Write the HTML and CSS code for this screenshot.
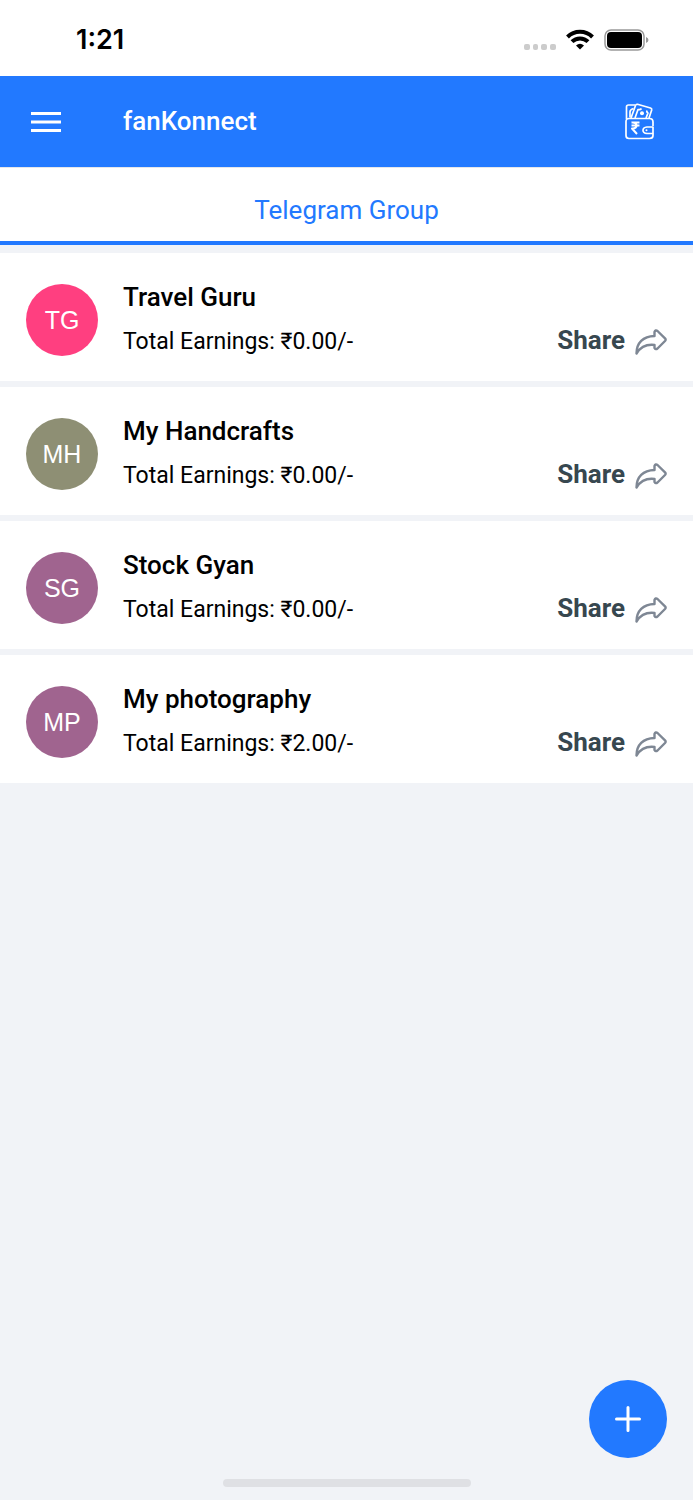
FILE: index.html
```html
<!DOCTYPE html>
<html lang="en">
<head>
  <meta charset="UTF-8">
  <title>fanKonnect</title>
  <meta name="viewport" content="width=device-width, initial-scale=1.0">
  <link rel="stylesheet" href="styles.css">
</head>
<body>

  <!-- icon used in every row -->
  <svg class="sprite" aria-hidden="true">
    <symbol id="share-icon" viewBox="0 0 32 28">
      <path d="M19.500 8V4Q20.500 1.500 22.500 3L30 10.300Q31.200 11.700 30 13L22.500 20.500Q20.500 22 19.500 20V17C11 16 5.500 19 1.500 25.500C1.500 15 8 8.300 19.500 8Z"/>
    </symbol>
  </svg>

  <div class="status-bar">
    <span class="time">1:21</span>
    <div class="status-icons">
      <svg class="signal" viewBox="0 0 32 6">
        <rect x="0" y="0" width="6" height="6" rx="2"/>
        <rect x="9" y="0" width="5" height="6" rx="2"/>
        <rect x="17" y="0" width="6" height="6" rx="2"/>
        <rect x="26" y="0" width="6" height="6" rx="2"/>
      </svg>
      <svg class="wifi" viewBox="0 0 28 21">
        <path d="M1.500 8A17.500 17.500 0 0 1 26.500 8M6 12.700A11.300 11.300 0 0 1 22 12.700"/>
        <path class="wifi-dot" d="M14 20.500L10 16.500Q14 13 18 16.500Z"/>
      </svg>
      <svg class="battery" viewBox="0 0 45 22">
        <rect class="battery-case" x="1" y="1" width="39" height="20" rx="6"/>
        <rect x="3" y="3" width="35" height="16" rx="4"/>
        <path class="battery-tip" d="M42 8Q44.500 9 44.500 11Q44.500 13 42 14Z"/>
      </svg>
    </div>
  </div>

  <header class="app-bar">
    <button class="icon-btn" type="button" aria-label="Menu">
      <svg class="menu-icon" viewBox="0 0 30 20">
        <path d="M0 1.500H30M0 10H30M0 18.500H30"/>
      </svg>
    </button>
    <h1 class="app-title">fanKonnect</h1>
    <button class="icon-btn" type="button" aria-label="Wallet">
      <svg class="wallet-icon" viewBox="0 0 30 37">
        <path d="M1.500 16V4Q1.500 2 3.500 2H10M5 14.500V9Q5 6.500 8.500 5.500"/>
        <path d="M6 15L10.500 2.500Q11 1 12.500 1.300L25.500 5Q27 5.500 26.700 7L24 15"/>
        <path d="M10 15L13 6.500Q15.500 7 16.500 5.500M22 7.500Q21.500 9.500 23 10L21 15"/>
        <circle class="wallet-fill" cx="17" cy="10.200" r="2"/>
        <path d="M28 23V19Q28 15.500 24.500 15.500H4Q1 15.500 1 18.500V32.500Q1 35.500 4 35.500H24.500Q28 35.500 28 32.500V30.500"/>
        <path d="M28 24H22Q18 24.500 18 27.200Q18 30 22 30.500H28Z"/>
        <circle class="wallet-fill" cx="21.500" cy="27.200" r="1"/>
        <path class="rupee" d="M6.500 19.500H14.500M6.500 22.500H14.500M6.500 19.500C13 18.500 13.500 26 7 25.500L12 31"/>
      </svg>
    </button>
  </header>

  <nav class="tabs">
    <a class="tab" href="#groups" aria-current="page">Telegram Group</a>
  </nav>

  <main class="groups" id="groups">
    <article class="group">
      <div class="avatar pink">TG</div>
      <div class="group-info">
        <h2 class="group-name">Travel Guru</h2>
        <p class="earnings">Total Earnings: ₹0.00/-</p>
      </div>
      <button class="share-btn" type="button">Share <svg class="share-icon"><use href="#share-icon"/></svg></button>
    </article>
    <article class="group">
      <div class="avatar olive">MH</div>
      <div class="group-info">
        <h2 class="group-name">My Handcrafts</h2>
        <p class="earnings">Total Earnings: ₹0.00/-</p>
      </div>
      <button class="share-btn" type="button">Share <svg class="share-icon"><use href="#share-icon"/></svg></button>
    </article>
    <article class="group">
      <div class="avatar plum">SG</div>
      <div class="group-info">
        <h2 class="group-name">Stock Gyan</h2>
        <p class="earnings">Total Earnings: ₹0.00/-</p>
      </div>
      <button class="share-btn" type="button">Share <svg class="share-icon"><use href="#share-icon"/></svg></button>
    </article>
    <article class="group">
      <div class="avatar plum">MP</div>
      <div class="group-info">
        <h2 class="group-name">My photography</h2>
        <p class="earnings">Total Earnings: ₹2.00/-</p>
      </div>
      <button class="share-btn" type="button">Share <svg class="share-icon"><use href="#share-icon"/></svg></button>
    </article>
  </main>

  <button class="add-btn" type="button" aria-label="Add group">
    <svg class="add-icon" viewBox="0 0 26 26">
      <path d="M13 1.500V24.500M1.500 13H24.500"/>
    </svg>
  </button>

  <div class="home-indicator"></div>

</body>
</html>
```
FILE: styles.css
```css
* {
  box-sizing: border-box;
}
body {
  margin: 0;
  min-height: 100vh;
  display: flex;
  flex-direction: column;
  background: #f1f3f7;
  color: #000;
  font-family: Roboto, "Noto Sans", sans-serif;
}
h1, h2, p {
  margin: 0;
}
button {
  padding: 0;
  border: none;
  background: none;
  font-family: inherit;
  cursor: pointer;
}
svg {
  display: block;
  flex: none;
}
.sprite {
  position: absolute;
  width: 0;
  height: 0;
}

/* status bar */
.status-bar {
  display: flex;
  justify-content: space-between;
  align-items: center;
  height: 76px;
  padding: 3px 44px 0 76px;
  background: #fff;
}
.time {
  font-family: Inter, sans-serif;
  font-size: 27px;
  font-weight: 600;
  line-height: 32px;
}
.status-icons {
  display: flex;
  align-items: center;
  gap: 10px;
  height: 26px;
}
.signal {
  width: 32px;
  height: 6px;
  margin-top: 14px;
  fill: #ccc;
}
.wifi {
  width: 28px;
  height: 21px;
  fill: none;
  stroke: #000;
  stroke-width: 4;
}
.wifi-dot {
  fill: #000;
  stroke: none;
}
.battery {
  width: 45px;
  height: 22px;
}
.battery-case {
  fill: none;
  stroke: #999;
  stroke-width: 1.5;
}
.battery-tip {
  fill: #999;
}

/* app bar */
.app-bar {
  display: flex;
  align-items: center;
  height: 91px;
  padding: 0 38px 0 31px;
  background: #2279ff;
  color: #fff;
}
.menu-icon {
  width: 30px;
  height: 20px;
  stroke: #fff;
  stroke-width: 3;
}
.app-title {
  flex: 1;
  margin-left: 62px;
  padding-bottom: 2px;
  font-size: 26px;
  font-weight: 500;
  line-height: 32px;
}
.wallet-icon {
  width: 30px;
  height: 37px;
  fill: none;
  stroke: #fff;
  stroke-width: 1.7;
  stroke-linejoin: round;
}
.wallet-fill {
  fill: #fff;
  stroke: none;
}
.rupee {
  stroke-width: 2;
}

/* tabs */
.tabs {
  display: flex;
  border-top: 1px solid #e4e6ea;
}
.tab {
  flex: 1;
  padding: 26px 0 15px;
  border-bottom: 4px solid #2279ff;
  background: #fff;
  color: #2279ff;
  font-size: 26px;
  line-height: 32px;
  text-align: center;
  text-decoration: none;
}

/* group list */
.groups {
  display: flex;
  flex-direction: column;
  gap: 6px;
  padding-top: 8px;
}
.group {
  display: flex;
  align-items: center;
  height: 128px;
  padding: 0 26px;
  background: #fff;
}
.avatar {
  flex: none;
  width: 72px;
  height: 72px;
  margin: 5px 25px 0 0;
  border-radius: 50%;
  color: #fff;
  font-family: "Liberation Sans", sans-serif;
  font-size: 25px;
  line-height: 72px;
  text-align: center;
}
.pink {
  background: #ff3f80;
}
.olive {
  background: #8e8f74;
}
.plum {
  background: #a0648f;
}
.group-info {
  flex: 1;
  padding-top: 4px;
}
.group-name {
  font-size: 26px;
  font-weight: 500;
  line-height: 32px;
}
.earnings {
  margin-top: 13px;
  font-size: 23px;
  line-height: 32px;
}
.share-btn {
  display: flex;
  align-items: center;
  gap: 10px;
  margin-top: 46px;
  color: #37474f;
  font-size: 26px;
  font-weight: 700;
  line-height: 32px;
}
.share-icon {
  width: 32px;
  height: 28px;
  margin-top: 4px;
  fill: none;
  stroke: #7e8794;
  stroke-width: 2.4;
  stroke-linejoin: round;
}

.add-btn {
  position: fixed;
  right: 26px;
  bottom: 42px;
  display: flex;
  align-items: center;
  justify-content: center;
  width: 78px;
  height: 78px;
  border-radius: 50%;
  background: #2279ff;
}
.add-icon {
  width: 26px;
  height: 26px;
  stroke: #fff;
  stroke-width: 3;
  stroke-linecap: round;
}
.home-indicator {
  width: 248px;
  height: 8px;
  margin: auto auto 13px;
  border-radius: 4px;
  background: #dfe0e4;
}
```
